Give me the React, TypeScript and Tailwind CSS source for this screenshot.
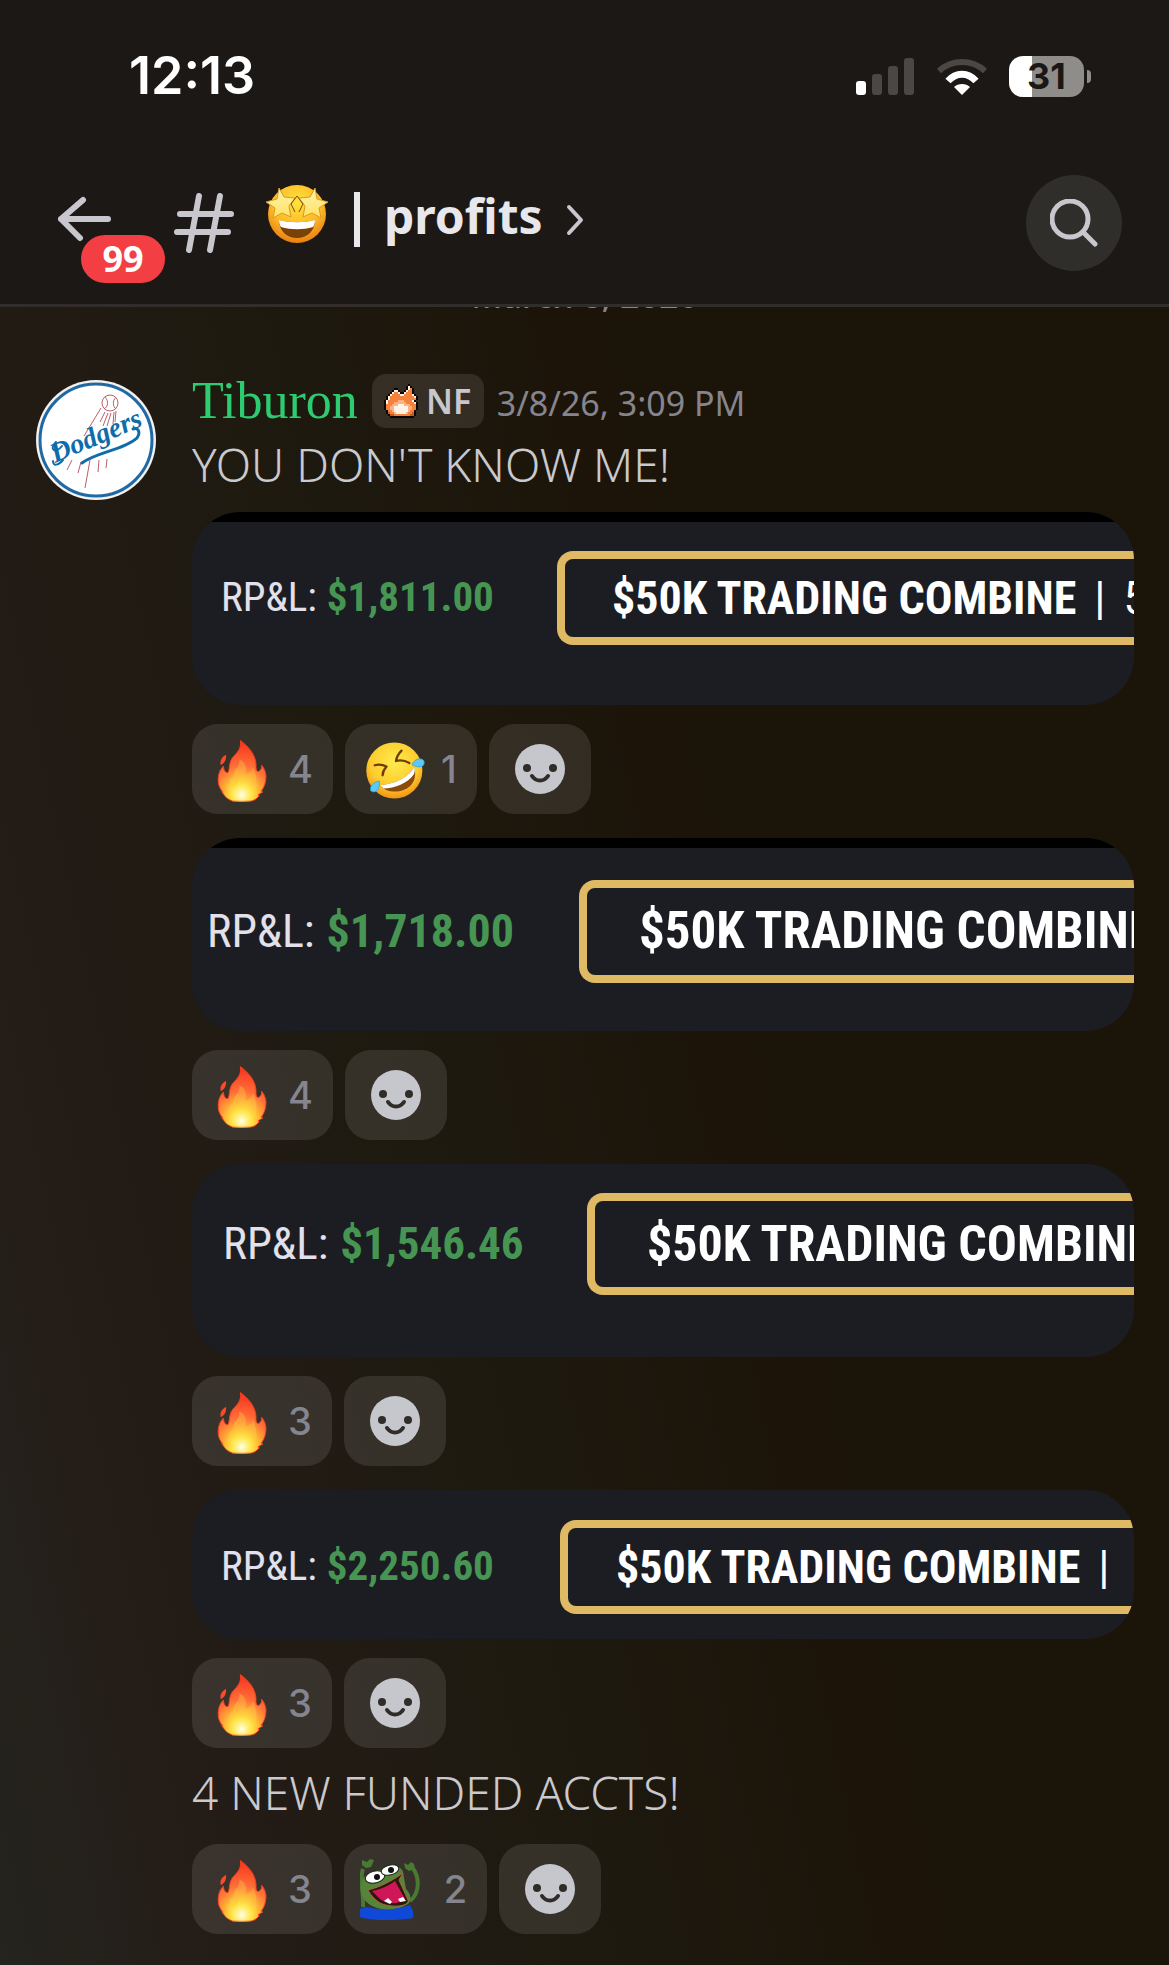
import React from 'react';

interface Reaction {
  kind: 'fire' | 'rofl' | 'frog';
  count: number;
}

interface Entry {
  id: number;
  text?: string;
  image?: {
    pnl: string;
    size: 'short' | 'tall';
    scale: 'sm' | 'lg' | 'xl';
    topBar: boolean;
    suffix: string;
    left: string;
    gap: string;
    top: string;
    inner: string;
  };
  reactions: Reaction[];
}

const entries: Entry[] = [
  {
    id: 1,
    text: "YOU DON'T KNOW ME!",
    image: { pnl: '$1,811.00', size: 'tall', scale: 'sm', topBar: true, suffix: '50KTC', left: 'pl-[29px]', gap: 'w-[336px]', top: 'pt-[39px]', inner: 'pl-[47px]' },
    reactions: [{ kind: 'fire', count: 4 }, { kind: 'rofl', count: 1 }],
  },
  {
    id: 2,
    image: { pnl: '$1,718.00', size: 'tall', scale: 'xl', topBar: true, suffix: '', left: 'pl-[15px]', gap: 'w-[372px]', top: 'pt-[42px]', inner: 'pl-[52px]' },
    reactions: [{ kind: 'fire', count: 4 }],
  },
  {
    id: 3,
    image: { pnl: '$1,546.46', size: 'tall', scale: 'lg', topBar: false, suffix: '', left: 'pl-[31px]', gap: 'w-[364px]', top: 'pt-[29px]', inner: 'pl-[52px]' },
    reactions: [{ kind: 'fire', count: 3 }],
  },
  {
    id: 4,
    image: { pnl: '$2,250.60', size: 'short', scale: 'sm', topBar: false, suffix: ' ', left: 'pl-[29px]', gap: 'w-[339px]', top: 'pt-[30px]', inner: 'pl-[48px]' },
    reactions: [{ kind: 'fire', count: 3 }],
  },
  {
    id: 5,
    text: '4 NEW FUNDED ACCTS!',
    reactions: [{ kind: 'fire', count: 3 }, { kind: 'frog', count: 2 }],
  },
];

const FireEmoji = () => (
  <svg viewBox="0 0 150 190" className="mt-1 h-[62px] w-[50px]" aria-hidden="true">
    <defs>
      <radialGradient id="fire-body" gradientUnits="userSpaceOnUse" cx="74" cy="165" r="150">
        <stop offset="0" stopColor="#fff9a0" />
        <stop offset="0.2" stopColor="#ffe83a" />
        <stop offset="0.4" stopColor="#ffa535" />
        <stop offset="0.58" stopColor="#ff7038" />
        <stop offset="1" stopColor="#fa3a22" />
      </radialGradient>
      <radialGradient id="fire-core" gradientUnits="userSpaceOnUse" cx="74" cy="168" r="40">
        <stop offset="0" stopColor="#fffff0" />
        <stop offset="1" stopColor="#fff04a" stopOpacity="0" />
      </radialGradient>
    </defs>
    <path
      d="M70 2C92 18 118 44 118 78C117 92 121 99 127 96C134 92 136 84 135 77C147 92 151 108 147 126C145 142 136 154 134 157L139 159L124 168L128 171C120 180 112 187 100 187H46C34 183 24 176 20 168L12 158L17 160C6 148 1 136 2 118C3 100 10 88 18 80C19 94 25 102 32 100C38 92 34 70 46 54C60 38 74 28 70 2Z"
      fill="url(#fire-body)"
      stroke="#f6401f"
      strokeWidth="3"
      strokeLinejoin="round"
    />
    <path d="M26 45C14 52 6 62 10 77C21 72 28 60 26 45Z" fill="#fb4a26" />
    <path d="M66 60C84 66 92 86 84 104C100 104 108 96 108 82C120 110 130 150 100 184H48C24 160 30 124 48 112C48 88 72 84 66 60Z" fill="#ffd04a" opacity="0.35" />
    <circle cx="74" cy="160" r="40" fill="url(#fire-core)" />
  </svg>
);

const RoflEmoji = () => (
  <svg viewBox="0 0 184 184" className="h-[61px] w-[61px]" aria-hidden="true">
    <defs>
      <radialGradient id="rofl-face" cx="0.5" cy="0.35" r="0.68">
        <stop offset="0" stopColor="#ffec4e" />
        <stop offset="0.65" stopColor="#fdcb2c" />
        <stop offset="1" stopColor="#f08c13" />
      </radialGradient>
    </defs>
    <circle cx="90" cy="95" r="86" fill="url(#rofl-face)" />
    <path d="M30 79C44 75 56 78 66 83C58 92 54 100 54 110M112 34C104 42 97 52 95 66C108 62 122 64 136 72" fill="none" stroke="#6f3d08" strokeWidth="7" strokeLinecap="round" strokeLinejoin="round" />
    <path d="M46 140C92 136 134 116 151 84C160 116 148 144 118 155C90 165 60 158 46 140Z" fill="#8a4a09" />
    <path d="M46 140C92 136 134 116 151 84C154 93 153 100 149 108C130 134 92 150 57 150Z" fill="#fff" />
    <path d="M144 77C152 58 174 54 181 66C186 84 164 90 144 77Z" fill="#5cc8f5" stroke="#2a9ad8" strokeWidth="2" />
    <path d="M44 127C26 130 12 144 18 158C34 168 48 150 44 127Z" fill="#5cc8f5" stroke="#2a9ad8" strokeWidth="2" />
  </svg>
);

const StarEmoji = () => (
  <svg viewBox="0 0 62 60" className="mb-[5px] h-[60px] w-[62px]" aria-hidden="true">
    <defs>
      <radialGradient id="star-face" cx="0.5" cy="0.3" r="0.72">
        <stop offset="0" stopColor="#ffe33d" />
        <stop offset="0.6" stopColor="#fdb827" />
        <stop offset="1" stopColor="#e87a10" />
      </radialGradient>
      <linearGradient id="star-fill" x1="0" y1="0" x2="0" y2="1">
        <stop offset="0" stopColor="#fff3ad" />
        <stop offset="1" stopColor="#ffe263" />
      </linearGradient>
    </defs>
    <circle cx="31" cy="30" r="29" fill="url(#star-face)" />
    <g fill="url(#star-fill)" stroke="#d99a1c" strokeWidth="1" strokeLinejoin="round">
      <path d="M13 4L18 13L29 14L23 22L25 33L16 29L7 34L9 24L0 18L11 15Z" />
      <path d="M49 4L44 13L33 14L39 22L37 33L46 29L55 34L53 24L62 18L51 15Z" />
    </g>
    <path d="M31 12L25 20L29 28M31 12L37 20L33 28" fill="none" stroke="#7a4a0a" strokeWidth="1" />
    <path d="M13 36C24 39 38 39 49 36C49 47 41 54 31 54C21 54 13 47 13 36Z" fill="#7a4206" />
    <path d="M13 36C24 39 38 39 49 36C49 39 48 42 47 43C37 46 25 46 15 43C14 42 13 39 13 36Z" fill="#fff" />
  </svg>
);

const FrogEmoji = () => (
  <svg viewBox="0 0 60 61" className="h-[61px] w-[60px]" aria-hidden="true">
    <path d="M52 8C60 18 60 34 50 42M3 10C-1 20 4 34 3 48" fill="none" stroke="#4a7a32" strokeWidth="4" />
    <path d="M44 4L48 6L51 3L54 5L55 10L49 12L45 9Z" fill="#4a7a32" />
    <path d="M2 1L7 3L10 0L14 1L11 8L6 9L2 6Z" fill="#4a7a32" />
    <path d="M2 22C6 12 18 12 24 10C32 5 42 7 43 13L46 30C52 36 52 44 46 46C34 54 12 52 4 40C0 34 0 28 2 22Z" fill="#55843a" />
    <path d="M0 50C6 46 12 50 20 50C30 52 42 48 50 46L53 52V59C36 62 10 62 0 58Z" fill="#1048d8" />
    <ellipse cx="15" cy="18" rx="10" ry="6" transform="rotate(-14 15 18)" fill="#fff" stroke="#16240f" />
    <ellipse cx="30" cy="11" rx="9" ry="5" transform="rotate(-14 30 11)" fill="#fff" stroke="#16240f" />
    <circle cx="17" cy="18" r="3" fill="#111" />
    <circle cx="31" cy="11" r="3" fill="#111" />
    <path d="M8 31C20 28 32 22 43 14L39 21L48 41C50 48 30 49 20 44C14 40 10 35 8 31Z" fill="#2b1a0c" stroke="#b3603a" />
    <path d="M12 32C22 30 30 26 35 22L45 40C38 46 26 45 20 40Z" fill="#cf1758" />
    <path d="M24 42L28 39L32 43L30 45ZM38 40L43 38L46 42L40 43Z" fill="#fff" />
  </svg>
);

const pixelRows = [
  '............k....',
  '...........kwk...',
  '.....kk....kwok..',
  '....kwwk..kwook..',
  '...kwoowkkwoook..',
  '..kwoooowwoooowk.',
  '.kwoooooooooooowk',
  '.kwoooooooooooook',
  'kwooooopppoooowk.',
  'kwoooppppppoooowk',
  'kooopppwwwpppoook',
  'kooppwwwwwwwppook',
  'kooppwwwwwwwppook',
  '.koopwwwwwwwpook.',
  '.kdoopwwwwwpoodk.',
  '..kddooooooooddk.',
  '...kkkkkkkkkkkk..',
];

const pixelColors: Record<string, string> = {
  k: '#0a0603',
  w: '#fff3e6',
  o: '#f5823a',
  p: '#fcb284',
  d: '#c85a1e',
};

const PixelFlame = () => (
  <svg viewBox="0 0 17 17" className="h-[34px] w-[34px]" shapeRendering="crispEdges" aria-hidden="true">
    {pixelRows.map((row, y) =>
      row.split('').map((c, x) =>
        pixelColors[c] ? <rect key={`${x}-${y}`} x={x} y={y} width="1" height="1" fill={pixelColors[c]} /> : null
      )
    )}
  </svg>
);

const TeamLogo = () => (
  <svg viewBox="0 0 120 120" className="h-[120px] w-[120px] shrink-0" role="img" aria-label="Tiburon avatar">
    <circle cx="60" cy="60" r="60" fill="#f4f1ee" />
    <circle cx="60" cy="60" r="56" fill="#fff" stroke="#1f6aa5" strokeWidth="3" />
    <g fill="none" stroke="#b8606c" strokeWidth="1">
      <circle cx="74" cy="23" r="8" />
      <path d="M69 17C73 21 72 27 68 29M80 17C76 21 77 27 80 29" />
      <path d="M65 28L48 56M69 32L64 42M72 33L67 46M75 33L71 46M78 32L77 44M80 31L79 42" />
      <path d="M36 80L31 90M45 82L42 93M54 80L49 108M63 80L62 92M71 79L70 88" />
    </g>
    <text x="19" y="83" transform="rotate(-23 19 83)" fill="#0f6cab" className="font-['Liberation_Serif',serif] text-[28px] font-bold italic">
      Dodgers
    </text>
    <path d="M20 62C12 70 20 74 26 66M27 80C22 86 17 86 17 81" fill="none" stroke="#0f6cab" strokeWidth="2" strokeLinecap="round" />
    <path d="M46 83C60 72 88 70 101 58C105 52 102 47 97 49" fill="none" stroke="#0f6cab" strokeWidth="3" strokeLinecap="round" />
  </svg>
);

const emojis = {
  fire: <FireEmoji />,
  rofl: <RoflEmoji />,
  frog: <FrogEmoji />,
};

const ReactionBar = ({ reactions }: { reactions: Reaction[] }) => (
  <div className="mt-[19px] flex gap-3">
    {reactions.map((r) => (
      <button
        key={r.kind}
        type="button"
        aria-label={`${r.kind} ${r.count}`}
        className={`flex h-[90px] items-center gap-4 rounded-[26px] bg-white/10 pr-5 ${r.kind === 'frog' ? 'pl-4' : 'pl-5'}`}
      >
        <span className={`flex ${r.kind === 'frog' ? 'w-[68px] justify-start' : 'w-[60px] justify-center'}`}>{emojis[r.kind]}</span>
        <span className="font-[Inter,sans-serif] text-[38px] leading-none font-medium text-[#85858f]">{r.count}</span>
      </button>
    ))}
    <button type="button" aria-label="Add reaction" className="flex h-[90px] w-[102px] items-center justify-center rounded-[26px] bg-white/10">
      <svg viewBox="0 0 50 50" className="h-[50px] w-[50px]" aria-hidden="true">
        <circle cx="25" cy="25" r="25" fill="#c6c6cd" />
        <circle cx="12" cy="24" r="4" fill="#302c28" />
        <circle cx="38" cy="24" r="4" fill="#302c28" />
        <path d="M17 32C21 38 29 38 33 32" fill="none" stroke="#302c28" strokeWidth="4" strokeLinecap="round" />
      </svg>
    </button>
  </div>
);

const labelSizes = {
  sm: 'h-[94px] gap-[10px] text-[41px]',
  lg: 'h-[102px] gap-[12px] text-[45px]',
  xl: 'h-[103px] gap-[12px] text-[46px]',
};

const boxSizes = {
  sm: 'h-[94px] text-[46px]',
  lg: 'h-[102px] text-[50px]',
  xl: 'h-[103px] text-[51px]',
};

const TradeImage = ({ image }: { image: NonNullable<Entry['image']> }) => (
  <div
    className={`flex flex-col overflow-hidden rounded-[48px] bg-[#1c1d22] font-['Roboto_Condensed','Liberation_Sans_Narrow',Roboto,sans-serif] whitespace-nowrap ${
      image.size === 'tall' ? 'h-[193px]' : 'h-[149px]'
    }`}
  >
    {image.topBar && <div className="-mb-[10px] h-[10px] shrink-0 bg-black" />}
    <div className={`flex ${image.left} ${image.top}`}>
      <div className={`flex shrink-0 items-center ${image.gap} ${labelSizes[image.scale]}`}>
        <span className="text-[#e2e0ea]">RP&amp;L:</span>
        <span className="font-bold text-[#469552]">{image.pnl}</span>
      </div>
      <div
        className={`flex flex-1 items-center gap-[18px] overflow-hidden rounded-l-[16px] border-8 border-r-0 border-[#dfb964] text-white ${image.inner} ${boxSizes[image.scale]}`}
      >
        <span className="font-bold">$50K TRADING COMBINE</span>
        {image.suffix && <span>|</span>}
        {image.suffix && <span>{image.suffix}</span>}
      </div>
    </div>
  </div>
);

const StatusBar = () => (
  <div className="flex h-[152px] items-center justify-between pr-[78px] pl-[129px]">
    <span className="font-[Inter,sans-serif] text-[52px] leading-none font-semibold text-white">12:13</span>
    <div className="flex items-center">
      <svg viewBox="0 0 58 37" className="h-[37px] w-[58px]" aria-hidden="true">
        <rect x="0" y="23" width="10" height="14" rx="3" fill="#fff" />
        <rect x="16" y="16" width="10" height="21" rx="3" fill="#4a4744" />
        <rect x="32" y="8" width="10" height="29" rx="3" fill="#4a4744" />
        <rect x="48" y="0" width="10" height="37" rx="3" fill="#4a4744" />
      </svg>
      <svg viewBox="0 0 52 37" className="ml-[22px] h-[37px] w-[52px]" aria-hidden="true">
        <path d="M3 13C16 1 36 1 49 13" fill="none" stroke="#4a4744" strokeWidth="6" />
        <path d="M12 23C20 14 32 14 40 23" fill="none" stroke="#fff" strokeWidth="7" />
        <path d="M26 37L18 29C22 25 30 25 34 29Z" fill="#fff" />
      </svg>
      <div className="ml-[21px] flex items-center gap-[3px]">
        <div className="flex h-[41px] w-[75px] items-center justify-center rounded-[14px] bg-linear-to-r from-white from-[23px] to-[#8f8d8a] to-[23px]">
          <span className="font-[Inter,sans-serif] text-[36px] leading-none font-bold text-[#1b1714]">31</span>
        </div>
        <div className="h-[13px] w-[4px] rounded-r-full bg-[#8f8d8a]" />
      </div>
    </div>
  </div>
);

const ChannelHeader = () => (
  <div className="flex h-[152px] items-start pt-[23px] pr-[47px] pl-[57px]">
    <button type="button" aria-label="Back" className="relative mt-[21px] w-[55px]">
      <svg viewBox="0 0 55 46" className="h-[46px] w-[55px]" aria-hidden="true">
        <path d="M26 4L4 23L23 42M4 23H51" fill="none" stroke="#c7c7cd" strokeWidth="6" strokeLinecap="round" strokeLinejoin="round" />
      </svg>
      <span className="absolute top-[39px] left-[24px] flex h-[48px] w-[84px] items-center justify-center rounded-full bg-[#f33f43] text-[36px] font-bold text-white">
        99
      </span>
    </button>
    <svg viewBox="0 0 60 60" className="mt-[18px] ml-[62px] h-[60px] w-[60px]" aria-hidden="true">
      <path d="M6 21H57M3 39H54M25 3L15 57M46 3L36 57" fill="none" stroke="#c7c7cd" strokeWidth="6" strokeLinecap="round" />
    </svg>
    <h1 className="ml-[32px] flex h-[82px] items-center text-[48px] font-bold text-[#e8e8ec]">
      <StarEmoji />
      <span className="mt-[6px] ml-[26px] h-[55px] w-[6px] bg-[#e8e8ec]" />
      <span className="ml-[24px]">profits</span>
      <svg viewBox="0 0 18 32" className="mt-[8px] ml-[23px] h-[32px] w-[18px]" aria-hidden="true">
        <path d="M3 3L15 16L3 29" fill="none" stroke="#c7c7cd" strokeWidth="4" strokeLinecap="round" strokeLinejoin="round" />
      </svg>
    </h1>
    <button type="button" aria-label="Search" className="ml-auto flex h-[96px] w-[96px] items-center justify-center rounded-full bg-[#302e2b]">
      <svg viewBox="0 0 48 48" className="h-[48px] w-[48px]" aria-hidden="true">
        <circle cx="20" cy="20" r="18" fill="none" stroke="#c7c7cd" strokeWidth="5" />
        <path d="M34 34L45 45" stroke="#c7c7cd" strokeWidth="5" strokeLinecap="round" />
      </svg>
    </button>
  </div>
);

const App: React.FC = () => {
  return (
    <div className="flex min-h-screen flex-col bg-[linear-gradient(78deg,#25241e_0%,#241c17_14%,#1e1a10_36%,#1c1409_58%,#1b1408_100%)] font-['Noto_Sans','Open_Sans',sans-serif]">
      <header className="border-b-3 border-[#302d2b] bg-[#1c1815]">
        <StatusBar />
        <ChannelHeader />
      </header>

      <main className="flex flex-col">
        {/* Date divider, mostly scrolled under the header */}
        <div className="flex h-[5px] flex-col items-center justify-end overflow-hidden">
          <span className="text-[34px] leading-none font-medium text-[#85858f]">March 8, 2026</span>
        </div>

        <article className="flex pt-[62px] pr-[35px] pb-[31px] pl-[36px]">
          <div className="mt-[6px] mr-[36px] shrink-0">
            <TeamLogo />
          </div>
          <div className="min-w-0 flex-1">
            <div className="flex h-[54px] items-center">
              <span className="font-['Liberation_Serif',serif] text-[52px] leading-none text-[#2ecc71]">Tiburon</span>
              <span className="ml-[14px] flex h-[54px] w-[112px] items-center justify-center gap-[8px] rounded-[14px] bg-white/10 text-[34px] font-semibold text-[#c7c7cd]">
                <PixelFlame />
                NF
              </span>
              <time className="mt-[4px] ml-[13px] text-[34px] text-[#85858f]">3/8/26, 3:09 PM</time>
            </div>

            {entries.map((entry, idx) => (
              <div key={entry.id} className={idx === 0 ? 'mt-[6px]' : entry.text ? 'mt-[14px]' : 'mt-[24px]'}>
                {entry.text && (
                  <p className={`text-[46px] leading-[60px] font-light text-[#c9c9ce] ${entry.image ? 'mb-[18px]' : 'mb-[22px]'}`}>{entry.text}</p>
                )}
                {entry.image && <TradeImage image={entry.image} />}
                <ReactionBar reactions={entry.reactions} />
              </div>
            ))}
          </div>
        </article>
      </main>
    </div>
  );
};

export default App;
